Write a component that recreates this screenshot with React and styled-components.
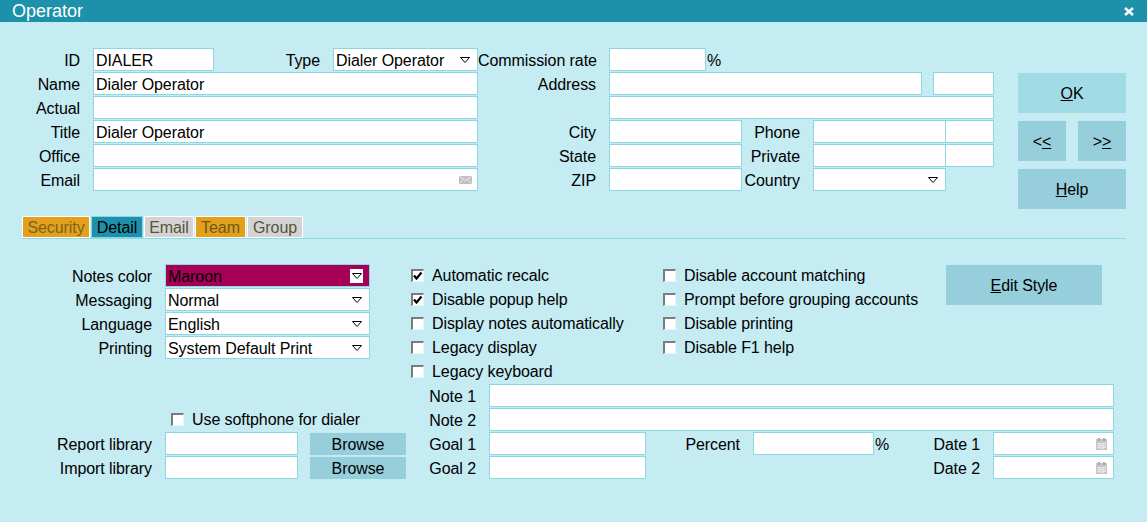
import React from 'react'
import styled, { createGlobalStyle } from 'styled-components'

const GlobalStyle = createGlobalStyle`
html, body {
  margin: 0;
  padding: 0;
  background: #c5ebf3;
}
body {
  font-family: "Liberation Sans", Arial, sans-serif;
  font-size: 16px;
  letter-spacing: -0.08px;
  color: #000;
}
`

const Window = styled.div`
width: 1147px;
height: 522px;
overflow: hidden;
background: #c5ebf3;
`

const TitleBar = styled.header`
display: flex;
justify-content: space-between;
align-items: center;
box-sizing: border-box;
height: 22px;
padding: 1px 13px 0 12px;
background: #1e91aa;
color: #fff;
font-size: 18px;
letter-spacing: 0;
`

const CloseIcon = styled.svg`
width: 10px;
height: 9px;
`

const TopForm = styled.section`
display: flex;
padding-top: 26px;
height: 194px;
box-sizing: border-box;
`

const Column = styled.div`
display: flex;
flex-direction: column;
width: ${p => p.$w}px;
`

const Row = styled.div`
display: flex;
align-items: flex-start;
height: 24px;
`

const Label = styled.label`
flex: none;
width: ${p => p.$w}px;
margin-right: 13px;
height: 23px;
line-height: 25px;
text-align: right;
white-space: nowrap;
`

const Field = styled.div`
flex: none;
display: flex;
align-items: center;
justify-content: space-between;
box-sizing: border-box;
width: ${p => p.$w}px;
height: 23px;
margin-left: ${p => p.$ml || 0}px;
padding: 0 ${p => p.$pr || 2}px 0 2px;
border: 1px solid #8dd6e4;
background: ${p => p.$bg || '#fff'};
white-space: nowrap;
`

const Value = styled.span`
padding-top: 2px;
`

const Suffix = styled.span`
height: 23px;
line-height: 25px;
margin-left: 1px;
`

const Buttons = styled.div`
display: flex;
flex-direction: column;
gap: 8px;
width: 108px;
margin: -1px 0 0 24px;
padding-top: 26px;
`

const Button = styled.button`
display: block;
flex: none;
box-sizing: border-box;
width: ${p => p.$w ? `${p.$w}px` : '100%'};
height: 40px;
padding: 2px 0 0;
border: 0;
background: ${p => p.$primary ? '#a1dce6' : '#96cfdb'};
color: #000;
font: inherit;
letter-spacing: inherit;
`

const ButtonPair = styled.div`
display: flex;
justify-content: space-between;
`

const EditButton = styled(Button)`
margin-top: 1px;
`

const Key = styled.span`
text-decoration: underline;
`

const Tabs = styled.nav`
display: flex;
align-items: flex-start;
height: 23px;
margin-left: 22px;
width: 1104px;
box-shadow: inset 0 -1px 0 #8dd6e4;
`

const Tab = styled.div`
box-sizing: border-box;
width: ${p => p.$w}px;
height: 22px;
margin-right: 1px;
line-height: 21px;
text-align: center;
border: 1px solid ${p => p.$active ? '#8dd6e4' : '#fff'};
background: ${p => p.$bg};
color: ${p => p.$fg};
`

const Detail = styled.section`
display: flex;
padding-top: 25px;
height: 145px;
box-sizing: border-box;
`

const CheckColumn = styled.div`
display: flex;
flex-direction: column;
width: ${p => p.$w}px;
`

const CheckRow = styled.label`
display: flex;
align-items: center;
height: 24px;
margin-top: -1px;
margin-bottom: 1px;
margin-left: ${p => p.$ml || 0}px;
white-space: nowrap;
`

const Box = styled.span`
flex: none;
display: flex;
align-items: center;
justify-content: center;
box-sizing: border-box;
width: 13px;
height: 13px;
margin-right: 8px;
background: #fff;
border: solid;
border-width: 2px 1px 1px 2px;
border-color: #7c7c7c #e8f6f9 #e8f6f9 #7c7c7c;
`

const Bottom = styled.section`
display: flex;
`

const ArrowWrap = styled.span`
flex: none;
display: flex;
align-items: center;
justify-content: center;
width: 13px;
height: 14px;
background: ${p => p.$chip ? '#fff' : 'transparent'};
`

const BrowseButton = styled(Button)`
width: 96px;
height: 22px;
margin: 1px 0 0 12px;
`

function Arrow({ onWhite }) {
  return (
    <ArrowWrap $chip={onWhite}>
      <svg width="10" height="6" viewBox="0 0 10 6">
        <path d="M0.5 0.5H9.5L5 5.5Z" fill="#fff" stroke="#000" strokeWidth="1" />
      </svg>
    </ArrowWrap>
  )
}

const Mail = () => (
  <svg width="13" height="8" viewBox="0 0 13 8">
    <rect width="13" height="8" fill="#c0c0c0" />
    <path d="M0.5 0.5L6.5 4.5L12.5 0.5M0.5 7.5L4.5 3.5M12.5 7.5L8.5 3.5" fill="none" stroke="#eeeeee" />
  </svg>
)

const Calendar = () => (
  <svg width="11" height="12" viewBox="0 0 11 12">
    <rect y="1" width="11" height="11" fill="#c6c6c6" />
    <rect x="2" width="2" height="3" fill="#a9a9a9" />
    <rect x="7" width="2" height="3" fill="#a9a9a9" />
    <path d="M1 5.5H10M1 7.5H10M1 9.5H10M3.5 5V11M5.5 5V11M7.5 5V11" stroke="#e8e8e8" fill="none" />
  </svg>
)

const Check = () => (
  <svg width="10" height="10" viewBox="0 0 10 10">
    <path d="M1 4.5L3.5 7.5L8.5 1.5" fill="none" stroke="#000" strokeWidth="2.2" />
  </svg>
)

const CheckItem = ({ on, children, ml }) => (
  <CheckRow $ml={ml}>
    <Box>{on && <Check />}</Box>
    <Value>{children}</Value>
  </CheckRow>
)

const leftRows = ['Name', 'Actual', 'Title', 'Office']
const values = { Name: 'Dialer Operator', Title: 'Dialer Operator' }

const selects = [
  ['Notes color', 'Maroon'],
  ['Messaging', 'Normal'],
  ['Language', 'English'],
  ['Printing', 'System Default Print'],
]

export default function App() {
  return (
    <Window>
      <GlobalStyle />
      <TitleBar>
        <span>Operator</span>
        <CloseIcon viewBox="0 0 10 9">
          <path d="M1 1L9 8M9 1L1 8" stroke="#fff" strokeWidth="2.4" fill="none" />
        </CloseIcon>
      </TitleBar>

      <TopForm>
        <Column $w={478}>
          <Row>
            <Label $w={80}>ID</Label>
            <Field $w={121}><Value>DIALER</Value></Field>
            <Label $w={106}>Type</Label>
            <Field $w={145} $pr={6}><Value>Dialer Operator</Value><Arrow /></Field>
          </Row>
          {leftRows.map(name => (
            <Row key={name}>
              <Label $w={80}>{name}</Label>
              <Field $w={385}><Value>{values[name]}</Value></Field>
            </Row>
          ))}
          <Row>
            <Label $w={80}>Email</Label>
            <Field $w={385} $pr={5}><span /><Mail /></Field>
          </Row>
        </Column>

        <Column $w={516}>
          <Row>
            <Label $w={118}>Commission rate</Label>
            <Field $w={97} />
            <Suffix>%</Suffix>
          </Row>
          <Row>
            <Label $w={118}>Address</Label>
            <Field $w={313} />
            <Field $w={61} $ml={11} />
          </Row>
          <Row>
            <Label $w={118} />
            <Field $w={385} />
          </Row>
          <Row>
            <Label $w={118}>City</Label>
            <Field $w={133} />
            <Label $w={58}>Phone</Label>
            <Field $w={133} />
            <Field $w={49} $ml={-1} />
          </Row>
          <Row>
            <Label $w={118}>State</Label>
            <Field $w={133} />
            <Label $w={58}>Private</Label>
            <Field $w={133} />
            <Field $w={49} $ml={-1} />
          </Row>
          <Row>
            <Label $w={118}>ZIP</Label>
            <Field $w={133} />
            <Label $w={58}>Country</Label>
            <Field $w={133} $pr={6}><span /><Arrow /></Field>
          </Row>
        </Column>

        <Buttons>
          <Button $primary><Key>O</Key>K</Button>
          <ButtonPair>
            <Button $w={48}>&lt;<Key>&lt;</Key></Button>
            <Button $w={48}>&gt;<Key>&gt;</Key></Button>
          </ButtonPair>
          <Button><Key>H</Key>elp</Button>
        </Buttons>
      </TopForm>

      <Tabs>
        <Tab $w={68} $bg="#e5a01b" $fg="#7a6420">Security</Tab>
        <Tab $w={52} $bg="#1e91aa" $fg="#000" $active>Detail</Tab>
        <Tab $w={50} $bg="#d3d3d3" $fg="#55553c">Email</Tab>
        <Tab $w={51} $bg="#e5a01b" $fg="#6a5a20">Team</Tab>
        <Tab $w={56} $bg="#d3d3d3" $fg="#55553c">Group</Tab>
      </Tabs>

      <Detail>
        <Column $w={411}>
          {selects.map(([label, value], i) => (
            <Row key={label}>
              <Label $w={152}>{label}</Label>
              <Field $w={205} $pr={6} $bg={i === 0 ? '#a50055' : '#fff'}>
                <Value>{value}</Value>
                <Arrow onWhite={i === 0} />
              </Field>
            </Row>
          ))}
        </Column>
        <CheckColumn $w={252}>
          <CheckItem on>Automatic recalc</CheckItem>
          <CheckItem on>Disable popup help</CheckItem>
          <CheckItem>Display notes automatically</CheckItem>
          <CheckItem>Legacy display</CheckItem>
          <CheckItem>Legacy keyboard</CheckItem>
        </CheckColumn>
        <CheckColumn $w={283}>
          <CheckItem>Disable account matching</CheckItem>
          <CheckItem>Prompt before grouping accounts</CheckItem>
          <CheckItem>Disable printing</CheckItem>
          <CheckItem>Disable F1 help</CheckItem>
        </CheckColumn>
        <EditButton $w={156}><Key>E</Key>dit Style</EditButton>
      </Detail>

      <Bottom>
        <Column $w={418}>
          <Row />
          <Row>
            <CheckItem ml={171}>Use softphone for dialer</CheckItem>
          </Row>
          <Row>
            <Label $w={152}>Report library</Label>
            <Field $w={133} />
            <BrowseButton>Browse</BrowseButton>
          </Row>
          <Row>
            <Label $w={152}>Import library</Label>
            <Field $w={133} />
            <BrowseButton>Browse</BrowseButton>
          </Row>
        </Column>
        <Column $w={696}>
          <Row>
            <Label $w={58}>Note 1</Label>
            <Field $w={625} />
          </Row>
          <Row>
            <Label $w={58}>Note 2</Label>
            <Field $w={625} />
          </Row>
          <Row>
            <Label $w={58}>Goal 1</Label>
            <Field $w={157} />
            <Label $w={94}>Percent</Label>
            <Field $w={121} />
            <Suffix>%</Suffix>
            <Label $w={91}>Date 1</Label>
            <Field $w={121} $pr={6}><span /><Calendar /></Field>
          </Row>
          <Row>
            <Label $w={58}>Goal 2</Label>
            <Field $w={157} />
            <Label $w={334}>Date 2</Label>
            <Field $w={121} $pr={6}><span /><Calendar /></Field>
          </Row>
        </Column>
      </Bottom>
    </Window>
  )
}
